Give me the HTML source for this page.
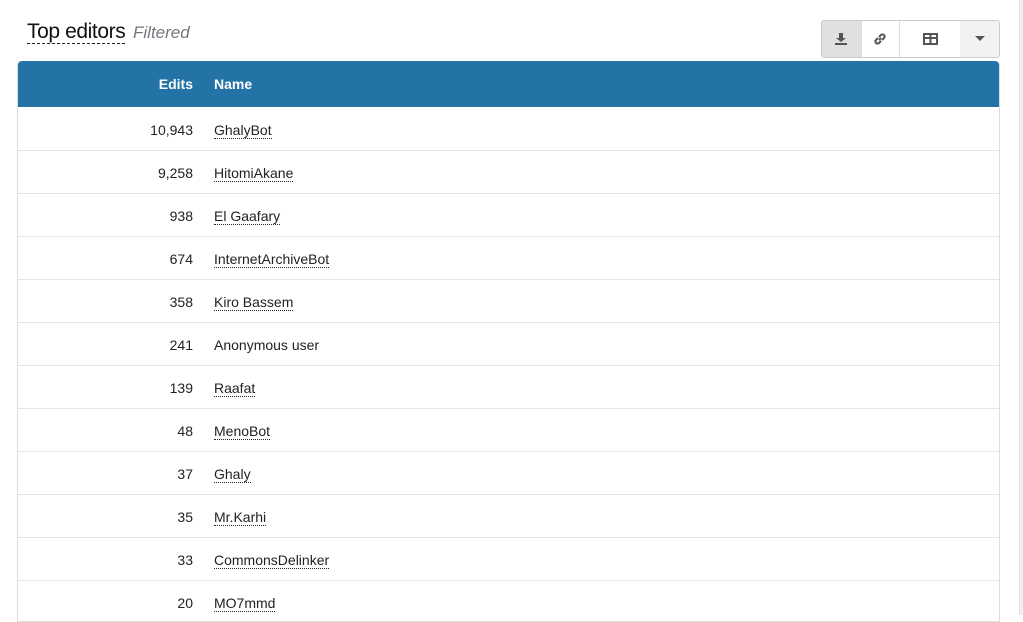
<!DOCTYPE html>
<html><head><style>
body{margin:0;background:#fff;font-family:"Liberation Sans",sans-serif;width:1023px;height:615px;overflow:hidden;position:relative}
.title{position:absolute;left:27px;top:20px;font-size:21px;color:#111;border-bottom:1px dashed #222;line-height:23px;letter-spacing:-0.4px}
.filt{position:absolute;left:133px;top:23px;font-size:17px;color:#72777d;font-style:italic}
.bg{position:absolute;left:821px;top:20px;width:177px;height:36px;border:1px solid #ccc;border-radius:3px;overflow:hidden;display:flex}
.bg div{height:36px;display:flex;align-items:center;justify-content:center}
.tbl{position:absolute;left:17px;top:61px;width:981px;border:1px solid #ddd;border-top:none;border-radius:4px 4px 0 0;height:560px;overflow:hidden}
.hd{background:#2473a6;height:46px;color:#fff;font-weight:bold;font-size:14px;position:relative;border-radius:4px 4px 0 0}
.row{height:42px;border-bottom:1px solid #e5e5e5;position:relative;font-size:14px;color:#222}
.row:first-of-type{}
.e{position:absolute;right:806px;top:14px}
.n{position:absolute;left:196px;top:14px}
.n u{text-decoration:none;border-bottom:1px dotted #222}
.edge{position:absolute;left:1019px;top:0;width:4px;height:615px;background:#f0f0f0;border-left:1px solid #e0e0e0}
</style></head><body>
<div class="title">Top editors</div><div class="filt">Filtered</div>
<div class="bg">
<div style="width:39px;background:#e0e0e0;border-right:1px solid #ddd"><svg width="14" height="14" viewBox="0 0 14 14"><path d="M5 1h4v5h3L7 10 2 6h3z M1 11h12v2H1z" fill="#555"/></svg></div>
<div style="width:38px;border-right:1px solid #ddd"><svg width="14" height="14" viewBox="0 0 14 14" fill="none" stroke="#555" stroke-width="2"><path d="M6 8l2-2M5 6L3 8a2 2 0 0 0 3 3l2-2M9 8l2-2a2 2 0 0 0-3-3L6 5"/></svg></div>
<div style="width:61px"><svg width="15" height="12" viewBox="0 0 15 12"><rect x="1" y="1" width="13" height="10" fill="none" stroke="#555" stroke-width="2"/><path d="M1 5h13M7.5 1v10" stroke="#555" stroke-width="2"/></svg></div>
<div style="width:39px;background:#f2f2f2"><svg width="10" height="6"><path d="M0 0h10L5 5z" fill="#555"/></svg></div>
</div>
<div class="tbl">
<div class="hd"><span style="position:absolute;right:806px;top:15px">Edits</span><span style="position:absolute;left:196px;top:15px">Name</span></div>
<div class="row" style="height:43px"><span class="e" style="top:15px">10,943</span><span class="n" style="top:15px"><u>GhalyBot</u></span></div>
<div class="row"><span class="e">9,258</span><span class="n"><u>HitomiAkane</u></span></div>
<div class="row"><span class="e">938</span><span class="n"><u>El Gaafary</u></span></div>
<div class="row"><span class="e">674</span><span class="n"><u>InternetArchiveBot</u></span></div>
<div class="row"><span class="e">358</span><span class="n"><u>Kiro Bassem</u></span></div>
<div class="row"><span class="e">241</span><span class="n">Anonymous user</span></div>
<div class="row"><span class="e">139</span><span class="n"><u>Raafat</u></span></div>
<div class="row"><span class="e">48</span><span class="n"><u>MenoBot</u></span></div>
<div class="row"><span class="e">37</span><span class="n"><u>Ghaly</u></span></div>
<div class="row"><span class="e">35</span><span class="n"><u>Mr.Karhi</u></span></div>
<div class="row"><span class="e">33</span><span class="n"><u>CommonsDelinker</u></span></div>
<div class="row"><span class="e">20</span><span class="n"><u>MO7mmd</u></span></div>
</div>
<div class="edge"></div>
</body></html>
